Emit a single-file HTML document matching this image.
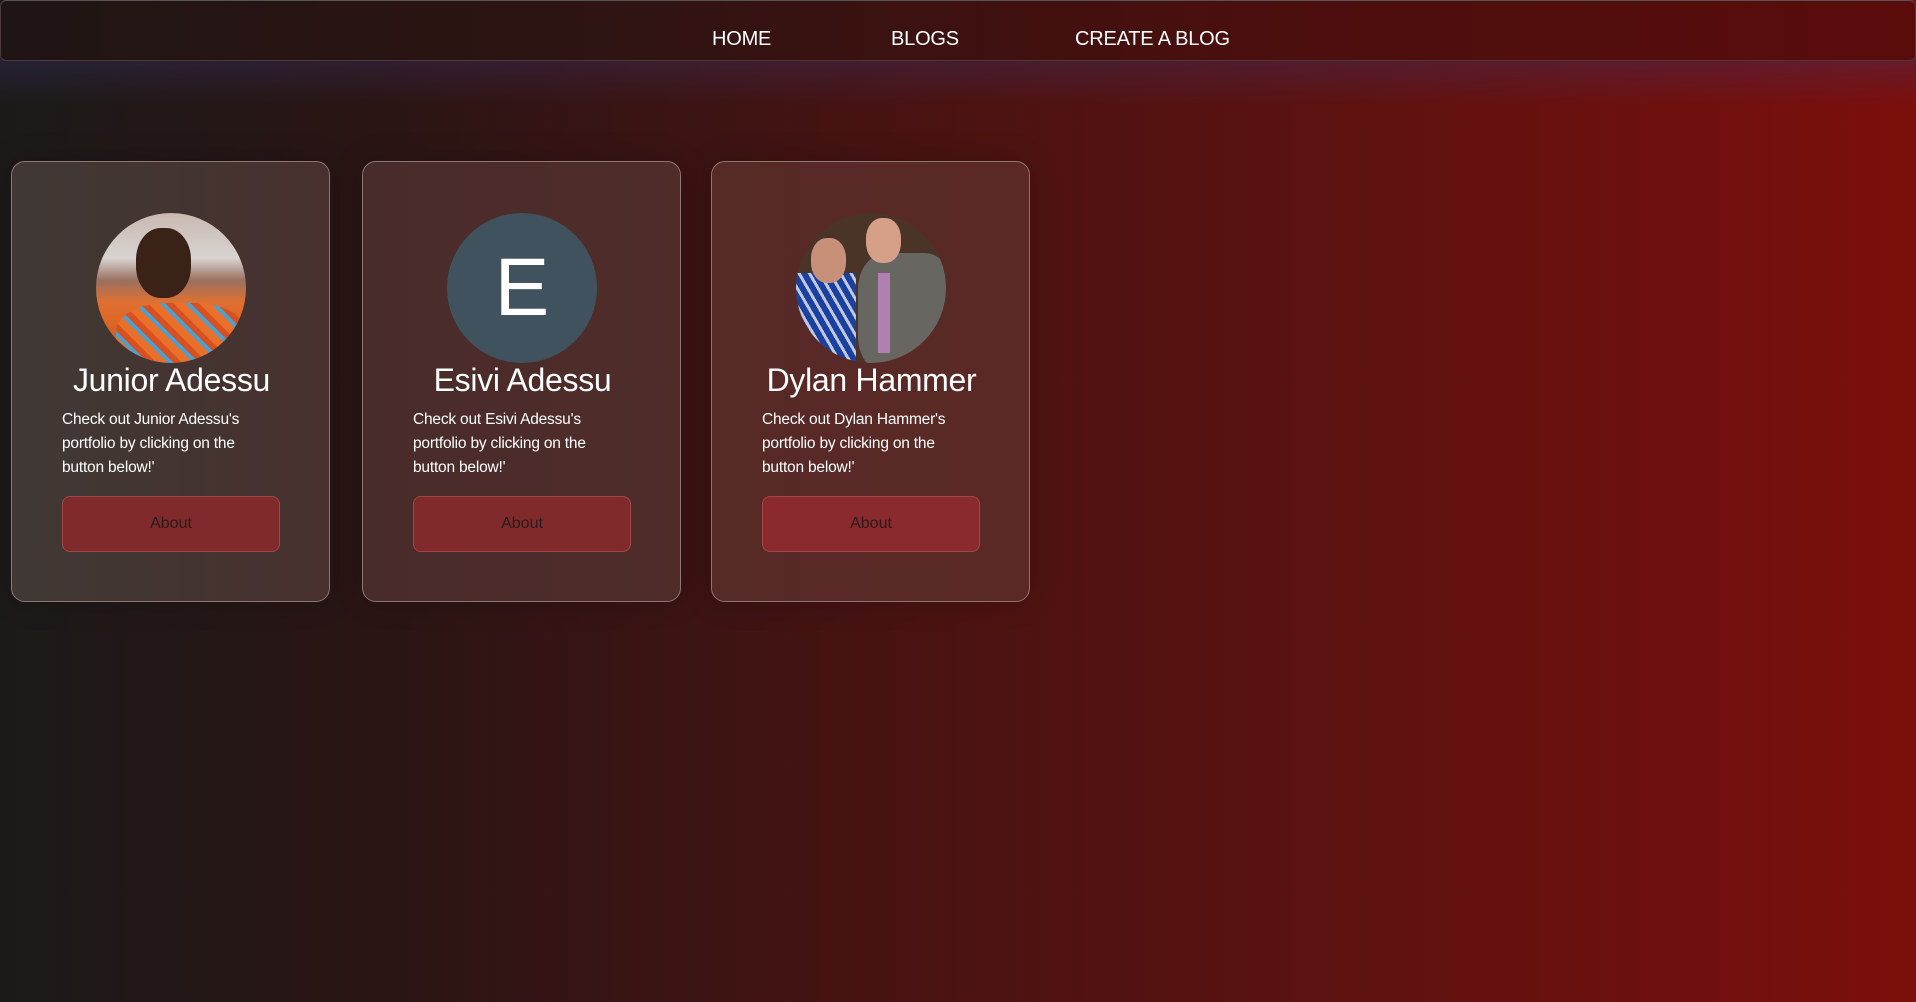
<!DOCTYPE html>
<html><head><meta charset="utf-8"><style>
*{margin:0;padding:0;box-sizing:border-box}
html,body{width:1916px;height:1002px;overflow:hidden}
body{font-family:"Liberation Sans",sans-serif;background:linear-gradient(90deg,#1c1a19 0%,#2a1514 20%,#461312 45%,#5d1210 70%,#7b0f0c 100%);position:relative}
.glow{position:absolute;left:0;top:55px;width:1916px;height:50px;background:linear-gradient(180deg,rgba(60,50,110,0.35),rgba(60,40,100,0));}
nav{position:absolute;left:0;top:0;width:1916px;height:61px;border:1px solid #4a3a3a;border-top-color:#555;border-radius:6px;background:linear-gradient(90deg,#1f1514,#2d1412 30%,#4a0f0e 65%,#5a0c0b);}
nav a{position:absolute;top:27px;color:#fff;font-size:20px;text-decoration:none;letter-spacing:-0.2px}
.card{position:absolute;top:161px;width:319px;height:441px;border:1px solid #8d7572;border-radius:14px;background:rgba(255,235,225,0.13);box-shadow:0 0 30px rgba(0,0,0,0.2)}
.av{position:absolute;left:84px;top:51px;width:150px;height:150px;border-radius:50%;overflow:hidden}
.name{position:absolute;left:-10px;top:200px;width:339px;text-align:center;color:#fff;font-size:32px;letter-spacing:-0.3px}
.txt{position:absolute;left:50px;top:246px;width:200px;color:#fff;font-size:15.5px;line-height:24px;letter-spacing:-0.2px}
.btn{position:absolute;left:50px;top:334px;width:218px;height:56px;border:1px solid #a04848;border-radius:8px;background:#812a2c;color:#2a1a1a;font-size:16px;text-align:center;line-height:54px}
</style></head><body>
<div class="glow"></div>
<nav><a style="left:711px">HOME</a><a style="left:890px">BLOGS</a><a style="left:1074px">CREATE A BLOG</a></nav>

<div class="card" style="left:11px;background:linear-gradient(90deg,rgba(70,62,58,0.85),rgba(80,55,52,0.8))">
 <div class="av" style="background:linear-gradient(180deg,#c9b8b0 0%,#d8d4d2 30%,#9a7060 45%,#e07030 60%,#d86020 80%,#4a90c0 100%)">
  <div style="position:absolute;left:40px;top:15px;width:55px;height:70px;border-radius:45%;background:#3a2218"></div>
  <div style="position:absolute;left:20px;top:90px;width:130px;height:70px;border-radius:40%;background:repeating-linear-gradient(45deg,#e8702a 0 8px,#4aa0d0 8px 12px,#d85020 12px 18px)"></div>
 </div>
 <div class="name">Junior Adessu</div>
 <div class="txt">Check out Junior Adessu's portfolio by clicking on the button below!'</div>
 <div class="btn">About</div>
</div>

<div class="card" style="left:362px;background:linear-gradient(90deg,rgba(80,50,48,0.8),rgba(85,50,46,0.8))">
 <div class="av" style="background:#3f525d;color:#fff;font-size:82px;text-align:center;line-height:150px">E</div>
 <div class="name">Esivi Adessu</div>
 <div class="txt">Check out Esivi Adessu's portfolio by clicking on the button below!'</div>
 <div class="btn">About</div>
</div>

<div class="card" style="left:711px;background:rgba(95,50,45,0.75)">
 <div class="av" style="background:#4a3428">
  <div style="position:absolute;left:0;top:60px;width:60px;height:100px;background:repeating-linear-gradient(60deg,#1a40a0 0 6px,#c0c8e0 6px 9px)"></div>
  <div style="position:absolute;left:15px;top:25px;width:35px;height:45px;border-radius:45%;background:#c89078"></div>
  <div style="position:absolute;left:62px;top:40px;width:95px;height:120px;border-radius:30%;background:#676660"></div>
  <div style="position:absolute;left:70px;top:5px;width:35px;height:45px;border-radius:45%;background:#d6a088"></div>
  <div style="position:absolute;left:82px;top:60px;width:12px;height:80px;background:#b080b0"></div>
 </div>
 <div class="name">Dylan Hammer</div>
 <div class="txt">Check out Dylan Hammer's portfolio by clicking on the button below!'</div>
 <div class="btn" style="background:#8a2a2e">About</div>
</div>
</body></html>
